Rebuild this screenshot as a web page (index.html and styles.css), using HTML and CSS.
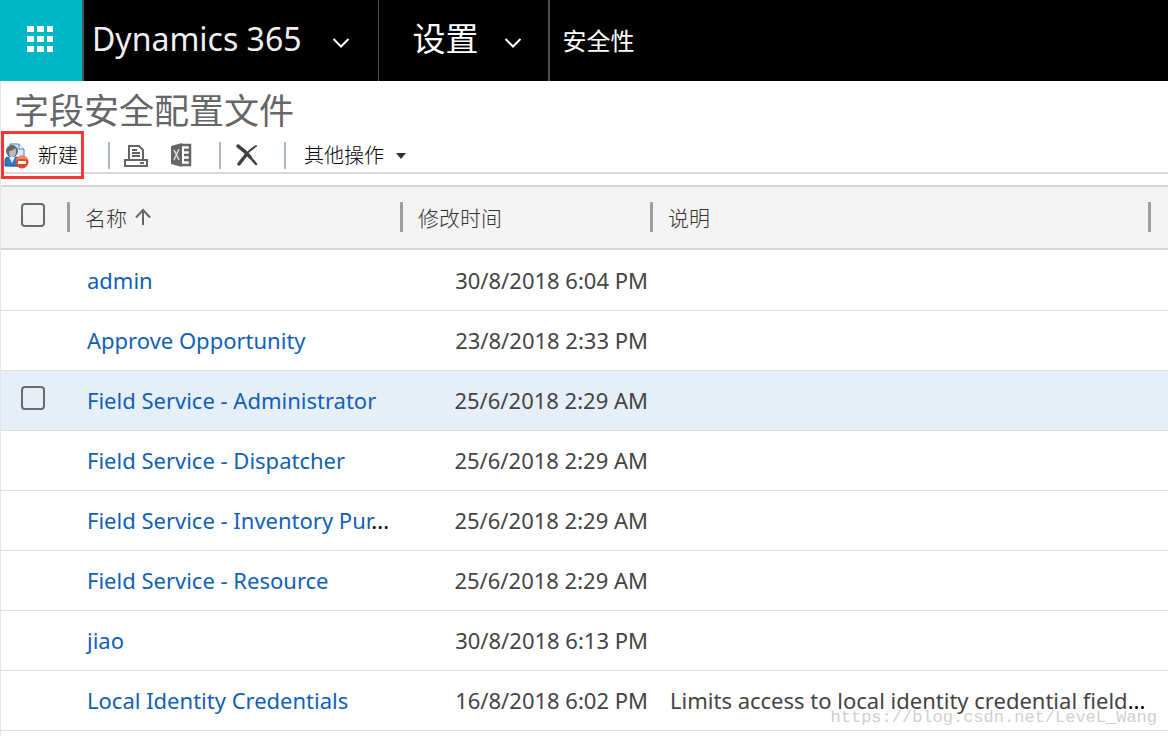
FILE: index.html
```html
<!DOCTYPE html>
<html lang="zh-CN">
<head>
<meta charset="utf-8">
<title>字段安全配置文件</title>
<link rel="stylesheet" href="styles.css">
</head>
<body>
<header class="topbar">
  <button class="launcher" type="button" aria-label="应用">
    <svg width="28" height="28" viewBox="0 0 28 28" fill="#fff"><path d="M1 1h7v6H1zM11 1h7v6h-7zM21 1h6v6h-6zM1 11h7v6H1zM11 11h7v6h-7zM21 11h6v6h-6zM1 21h7v6H1zM11 21h7v6h-7zM21 21h6v6h-6z"/></svg>
  </button>
  <button class="brand" type="button"><span>Dynamics 365</span>
    <svg class="chevron" width="18" height="12" viewBox="0 0 18 12" fill="none" stroke="#fff" stroke-width="2"><path d="M1.500 2 9 9.500 16.500 2"/></svg>
  </button>
  <button class="area" type="button"><span>设置</span>
    <svg class="chevron" width="18" height="12" viewBox="0 0 18 12" fill="none" stroke="#fff" stroke-width="2"><path d="M1.500 2 9 9.500 16.500 2"/></svg>
  </button>
  <a class="crumb" href="#">安全性</a>
</header>
<main>
  <h1 class="title">字段安全配置文件</h1>
  <div class="toolbar">
    <button class="tool new" type="button">
      <svg width="26" height="26" viewBox="0 0 26 26">
        <path d="M6 1h9l5 5v17H6z" fill="#dceafa" stroke="#4a7fc0"/>
        <path d="M15 1v5h5" fill="#fff" stroke="#4a7fc0"/>
        <path d="M1 23v-6q0-3 4-3h6q4 0 4 3v6z" fill="#2f78c8" stroke="#1d559c"/>
        <path d="m5 14 3 6 3-6z" fill="#e8f2fc"/>
        <circle cx="8" cy="8" r="6" fill="#646669"/>
        <path d="M5 8q4 0 6-3 2 2 1 5-1 4-4 4t-3-6z" fill="#b9babb"/>
        <circle cx="18" cy="19" r="6.500" fill="#d94b25"/>
        <path d="M12 17q1-4 6-4t6 4q-6-2-12 0z" fill="#ee8a61"/>
        <path d="M14 18h8v3h-8z" fill="#fff"/>
      </svg><span>新建</span>
    </button>
    <span class="divider"></span>
    <button class="tool print" type="button" aria-label="打印">
      <svg width="26" height="24" viewBox="0 0 26 24" fill="none" stroke="#666" stroke-width="2"><path d="M6 15V2h10l4 4v9M9 6h5M9 9h8M9 12h8"/><path d="M2 16h22v6H2z"/><path d="M17 19h4"/></svg>
    </button>
    <button class="tool excel" type="button" aria-label="导出到 Excel">
      <svg width="22" height="26" viewBox="0 0 22 26"><path fill="#666" d="M1 4 12 1v24L1 22z"/><path d="m4 8 5 10M9 7 4 18" fill="none" stroke="#ddd" stroke-width="1.500"/><path d="M12 3h8v20h-8M14 8h6M14 13h6M14 18h6" fill="none" stroke="#666" stroke-width="2.500"/></svg>
    </button>
    <span class="divider"></span>
    <button class="tool delete" type="button" aria-label="删除">
      <svg width="24" height="24" viewBox="0 0 24 24" fill="none" stroke="#3d4145" stroke-linecap="round"><path d="M3 3q7 5 12 11" stroke-width="3.500"/><path d="m13 12 8 9" stroke-width="2.500"/><path d="M21 3q-7 4-12 11" stroke-width="2"/><path d="m11 12-7 9" stroke-width="3.500"/></svg>
    </button>
    <span class="divider"></span>
    <button class="tool more" type="button"><span>其他操作</span>
      <svg width="10" height="8" viewBox="0 0 10 8" fill="#333"><path d="M0 1h10L5 7z"/></svg>
    </button>
  </div>
  <table class="grid">
    <colgroup><col class="c-check"><col class="c-name"><col class="c-date"><col><col class="c-end"></colgroup>
    <thead>
      <tr>
        <th><input class="box" type="checkbox" aria-label="全选"></th>
        <th><div class="head">名称<svg class="sort" width="18" height="18" viewBox="0 0 18 18" fill="none" stroke="#666" stroke-width="2"><path d="M9 17V2M2 9.500 9 2l7 7.500"/></svg></div></th>
        <th><div class="head">修改时间</div></th>
        <th><div class="head">说明</div></th>
        <th><div class="head"></div></th>
      </tr>
    </thead>
    <tbody>
      <tr><td></td><td><a href="#">admin</a></td><td class="date">30/8/2018 6:04 PM</td><td></td><td></td></tr>
      <tr><td></td><td><a href="#">Approve Opportunity</a></td><td class="date">23/8/2018 2:33 PM</td><td></td><td></td></tr>
      <tr class="hover"><td><input class="box" type="checkbox" aria-label="选择 Field Service - Administrator"></td><td><a href="#">Field Service - Administrator</a></td><td class="date">25/6/2018 2:29 AM</td><td></td><td></td></tr>
      <tr><td></td><td><a href="#">Field Service - Dispatcher</a></td><td class="date">25/6/2018 2:29 AM</td><td></td><td></td></tr>
      <tr><td></td><td><a href="#">Field Service - Inventory Pur</a><span class="dots">...</span></td><td class="date">25/6/2018 2:29 AM</td><td></td><td></td></tr>
      <tr><td></td><td><a href="#">Field Service - Resource</a></td><td class="date">25/6/2018 2:29 AM</td><td></td><td></td></tr>
      <tr><td></td><td><a href="#">jiao</a></td><td class="date">30/8/2018 6:13 PM</td><td></td><td></td></tr>
      <tr><td></td><td><a href="#">Local Identity Credentials</a></td><td class="date">16/8/2018 6:02 PM</td><td>Limits access to local identity credential field<span class="dots">...</span></td><td></td></tr>
    </tbody>
  </table>
</main>
<div class="watermark">https://blog.csdn.net/LeveL_Wang</div>
</body>
</html>
```

FILE: styles.css
```css
* { box-sizing: border-box; }
body {
  margin: 0;
  min-height: 100vh;
  position: relative;
  display: flex;
  flex-direction: column;
  background: #fff;
  color: #444;
  font-family: "Noto Sans", "Noto Sans CJK SC", sans-serif;
  font-size: 22px;
}
button {
  border: 0;
  padding: 0;
  background: none;
  color: inherit;
  font-family: inherit;
  display: flex;
  align-items: center;
}
svg { display: block; flex: none; }
main { flex: 1; border-left: 1px solid #e5e5e5; }
.topbar { display: flex; height: 81px; background: #000; color: #fff; }
.launcher { width: 82px; padding-left: 26px; padding-bottom: 3px; background: #00b7c6; }
.brand { border-left: 2px solid #505050; padding: 0 28px 4px 8px; gap: 30px; font-size: 32px; line-height: 48px; color: #f0f0f0; }
.area { border-left: 1px solid #505050; padding: 0 26px 4px 34px; gap: 25px; font-size: 33px; line-height: 48px; }
.chevron { margin-top: 8px; }
.crumb { display: flex; align-items: center; border-left: 2px solid #505050; padding: 0 0 2px 13px; color: #fff; font-size: 24px; text-decoration: none; }
.title { margin: 0; padding: 5px 13px 0; height: 50px; font-size: 35px; line-height: 50px; font-weight: 400; color: #666; }
.toolbar { display: flex; align-items: center; height: 43px; margin-bottom: 11px; border-bottom: 2px solid #d9d9d9; color: #000; }
.tool { font-size: 20px; line-height: 28px; font-weight: 300; }
.new { height: 48px; margin: 0 24px 0 0; padding: 2px 3px 0 0; gap: 8px; border: 3px solid #f93535; align-self: flex-start; flex: none; }
.divider { width: 2px; height: 27px; margin-top: 8px; background: #b0b7c0; }
.print { margin: 8px 21px 0 13px; }
.excel { margin: 6px 27px 0 0; }
.delete { margin: 6px 25px 0 14px; }
.more { margin: 9px 0 0 18px; gap: 12px; }
.grid { width: 100%; table-layout: fixed; border-collapse: separate; border-spacing: 0; }
.c-check { width: 66px; }
.c-name { width: 333px; }
.c-date { width: 250px; }
.c-end { width: 20px; }
th { height: 65px; padding: 0 0 2px; background: #f4f4f4; border-top: 2px solid #d5d5d5; border-bottom: 2px solid #d5d5d5; font-weight: 300; text-align: left; }
.head { display: flex; align-items: center; gap: 7px; height: 30px; padding-left: 15px; border-left: 3px solid #a0a0a0; font-size: 21px; color: #333; }
td { height: 60px; padding: 0 0 2px 20px; border-bottom: 1px solid #dedede; white-space: nowrap; line-height: 30px; }
tbody tr:first-child td { height: 61px; padding-bottom: 0; }
td.date { padding-left: 0; padding-right: 2px; text-align: right; }
td a { color: #1160b7; text-decoration: none; }
.dots { color: #000; }
.hover td { background: #e6eff7; }
.box { appearance: none; display: block; width: 24px; height: 24px; margin: 0 0 4px 20px; border: 2px solid #6b6b6b; border-radius: 4px; background: transparent; }
td:first-child { padding-left: 0; }
.watermark { position: absolute; right: 11px; bottom: 6px; font-family: "Liberation Mono", monospace; font-size: 17px; line-height: 24px; color: #d0d0d0; }
```
